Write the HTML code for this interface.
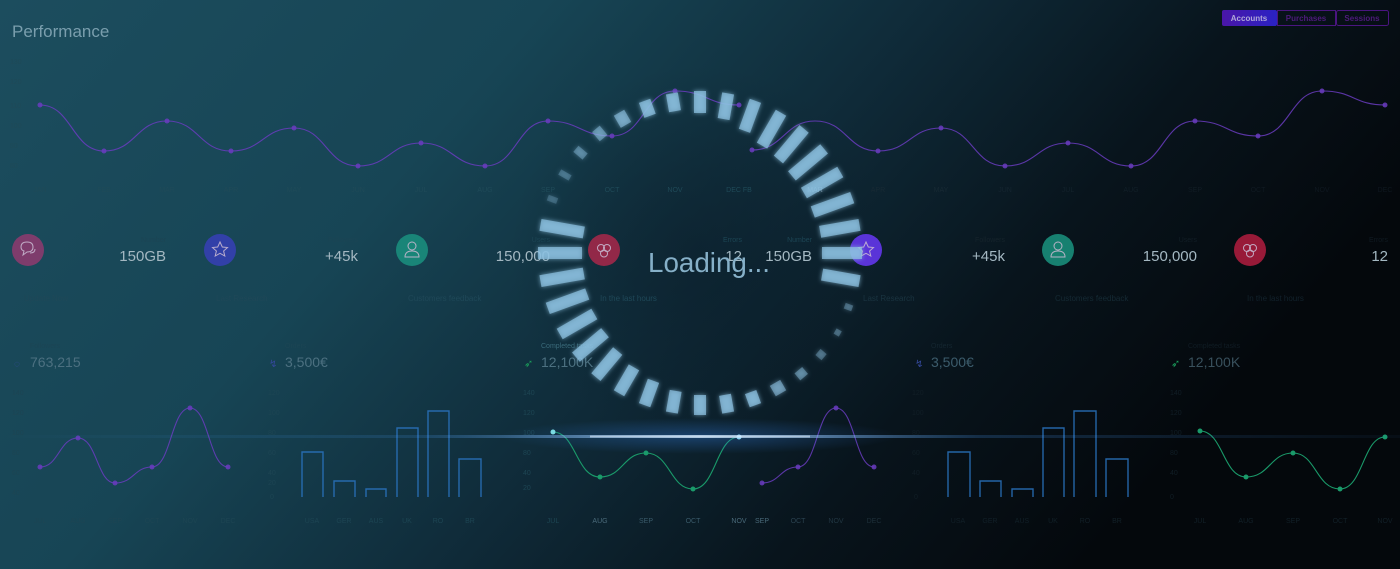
<!DOCTYPE html>
<html><head><meta charset="utf-8"><style>
html,body{margin:0;padding:0;width:1400px;height:569px;overflow:hidden;background:#0a1820;font-family:"Liberation Sans",sans-serif}
svg{position:absolute;left:0;top:0}
</style></head><body>
<svg width="1400" height="569" viewBox="0 0 1400 569" xmlns="http://www.w3.org/2000/svg">
<defs>
<linearGradient id="bg" x1="0" y1="0" x2="1" y2="0.35">
<stop offset="0" stop-color="#1c4d5e"/><stop offset="0.35" stop-color="#174555"/><stop offset="0.6" stop-color="#0f2a38"/><stop offset="0.8" stop-color="#08141c"/><stop offset="1" stop-color="#04080c"/>
</linearGradient>
<radialGradient id="dark" cx="700" cy="255" r="190" gradientUnits="userSpaceOnUse">
<stop offset="0" stop-color="#0a1c28" stop-opacity="0.5"/><stop offset="1" stop-color="#0a1c28" stop-opacity="0"/>
</radialGradient>
<linearGradient id="streak" x1="0" y1="0" x2="1" y2="0">
<stop offset="0" stop-color="#4aa0ff" stop-opacity="0"/><stop offset="0.3" stop-color="#4aa0ff" stop-opacity="0.2"/><stop offset="0.5" stop-color="#cfe8ff" stop-opacity="0.9"/><stop offset="0.7" stop-color="#4aa0ff" stop-opacity="0.25"/><stop offset="1" stop-color="#4aa0ff" stop-opacity="0.05"/>
</linearGradient>
<radialGradient id="glow" cx="0.5" cy="0.5" r="0.5">
<stop offset="0" stop-color="#3a8cff" stop-opacity="0.3"/><stop offset="1" stop-color="#3a8cff" stop-opacity="0"/>
</radialGradient>
<linearGradient id="tab" x1="0" x2="1"><stop offset="0" stop-color="#4a16a8"/><stop offset="1" stop-color="#2a22c4"/></linearGradient>
<filter id="gl" x="-50%" y="-50%" width="200%" height="200%"><feGaussianBlur stdDeviation="2.5" result="b"/><feMerge><feMergeNode in="b"/><feMergeNode in="SourceGraphic"/></feMerge></filter>
</defs>
<rect width="1400" height="569" fill="url(#bg)"/>
<rect width="1400" height="569" fill="url(#dark)"/>

<text x="12" y="37" font-size="17" fill="#7a9ead">Performance</text>

<rect x="1222" y="10" width="55" height="16" rx="2" fill="url(#tab)"/>
<rect x="1277.5" y="10.5" width="58" height="15" fill="none" stroke="#4a1580"/>
<rect x="1336.5" y="10.5" width="52" height="15" rx="2" fill="none" stroke="#4a1580"/>
<text x="1249" y="21" font-size="8" fill="#b0a8d8" text-anchor="middle" font-weight="bold">Accounts</text>
<text x="1306" y="21" font-size="8" fill="#4e1a7c" text-anchor="middle" font-weight="bold">Purchases</text>
<text x="1362" y="21" font-size="8" fill="#4e1a7c" text-anchor="middle" font-weight="bold">Sessions</text>

<g font-size="7" fill="#1f4a58">
<text x="10" y="64">130</text><text x="10" y="84">120</text><text x="10" y="108">110</text><text x="10" y="128">100</text><text x="10" y="148">90</text><text x="10" y="168">80</text>
</g>
<g fill="none" stroke="#6a3cc0" stroke-width="1.1" opacity="0.85">
<path d="M40,105 C72,105 72,151 104,151 C136,151 136,121 167,121 C199,121 199,151 231,151 C263,151 263,128 294,128 C326,128 326,166 358,166 C390,166 390,143 421,143 C453,143 453,166 485,166 C517,166 517,121 548,121 C580,121 580,136 612,136 C644,136 644,91 675,91 C707,91 707,105 739,105"/>
<path d="M752,150 C784,150 784,121 815,121 C847,121 847,151 878,151 C910,151 910,128 941,128 C973,128 973,166 1005,166 C1037,166 1037,143 1068,143 C1100,143 1100,166 1131,166 C1163,166 1163,121 1195,121 C1227,121 1227,136 1258,136 C1290,136 1290,91 1322,91 C1354,91 1354,105 1385,105"/>
</g>
<g fill="#6a3cc0" opacity="0.85">
<circle cx="40" cy="105" r="2.5"/><circle cx="104" cy="151" r="2.5"/><circle cx="167" cy="121" r="2.5"/><circle cx="231" cy="151" r="2.5"/><circle cx="294" cy="128" r="2.5"/><circle cx="358" cy="166" r="2.5"/><circle cx="421" cy="143" r="2.5"/><circle cx="485" cy="166" r="2.5"/><circle cx="548" cy="121" r="2.5"/><circle cx="612" cy="136" r="2.5"/><circle cx="675" cy="91" r="2.5"/><circle cx="739" cy="105" r="2.5"/>
<circle cx="752" cy="150" r="2.5"/><circle cx="878" cy="151" r="2.5"/><circle cx="941" cy="128" r="2.5"/><circle cx="1005" cy="166" r="2.5"/><circle cx="1068" cy="143" r="2.5"/><circle cx="1131" cy="166" r="2.5"/><circle cx="1195" cy="121" r="2.5"/><circle cx="1258" cy="136" r="2.5"/><circle cx="1322" cy="91" r="2.5"/><circle cx="1385" cy="105" r="2.5"/>
</g>
<g font-size="7" fill="#1f4a58" text-anchor="middle">
<text x="40" y="192">JAN</text><text x="104" y="192">FEB</text><text x="167" y="192">MAR</text><text x="231" y="192">APR</text><text x="294" y="192">MAY</text><text x="358" y="192">JUN</text><text x="421" y="192">JUL</text><text x="485" y="192">AUG</text><text x="548" y="192">SEP</text><text x="612" y="192">OCT</text><text x="675" y="192">NOV</text><text x="739" y="192">DEC FB</text>
<text x="815" y="192" fill="#7890a0">MAR</text><text x="878" y="192" fill="#182a34">APR</text><text x="941" y="192" fill="#182a34">MAY</text><text x="1005" y="192" fill="#152530">JUN</text><text x="1068" y="192" fill="#13222c">JUL</text><text x="1131" y="192" fill="#121f28">AUG</text><text x="1195" y="192" fill="#111c24">SEP</text><text x="1258" y="192" fill="#101a22">OCT</text><text x="1322" y="192" fill="#0f1820">NOV</text><text x="1385" y="192" fill="#0f1820">DEC</text>
</g>

<circle cx="28" cy="250" r="16" fill="#7e3c6c"/>
<circle cx="220" cy="250" r="16" fill="#3240a8"/>
<circle cx="412" cy="250" r="16" fill="#198578"/>
<circle cx="604" cy="250" r="16" fill="#922848"/>
<circle cx="866" cy="250" r="16" fill="#5a34d8"/>
<circle cx="1058" cy="250" r="16" fill="#178070"/>
<circle cx="1250" cy="250" r="16" fill="#981a38"/>
<g fill="none" stroke="#c8b8d0" stroke-width="1" opacity="0.9">
<path d="M21,247 Q21,242 27,242 Q33,242 33,247 Q33,252 27,252 L23,255 L24,251 Q21,250 21,247 Z"/><path d="M30,253 Q35,253 35,249"/>
<path d="M220,242 L222.3,247 L227.5,247.5 L223.6,251 L224.8,256 L220,253.3 L215.2,256 L216.4,251 L212.5,247.5 L217.7,247 Z"/>
<path d="M866,242 L868.3,247 L873.5,247.5 L869.6,251 L870.8,256 L866,253.3 L861.2,256 L862.4,251 L858.5,247.5 L863.7,247 Z"/>
<circle cx="412" cy="246" r="4"/><path d="M405,257 Q405,251 412,251 Q419,251 419,257 Z"/>
<circle cx="1058" cy="246" r="4"/><path d="M1051,257 Q1051,251 1058,251 Q1065,251 1065,257 Z"/>
<circle cx="601" cy="248" r="3.5"/><circle cx="607" cy="248" r="3.5"/><circle cx="604" cy="253.5" r="3.5"/>
<circle cx="1247" cy="248" r="3.5"/><circle cx="1253" cy="248" r="3.5"/><circle cx="1250" cy="253.5" r="3.5"/>
</g>
<g font-size="7" fill="#1c4554" text-anchor="end">
<text x="166" y="242">Number</text><text x="358" y="242">Followers</text><text x="550" y="242">Users</text><text x="742" y="242">Errors</text><text x="812" y="242">Number</text><text x="1005" y="242" fill="#16242c">Followers</text><text x="1197" y="242" fill="#121e26">Users</text><text x="1388" y="242" fill="#101a22">Errors</text>
</g>
<g font-size="15" fill="#a4b8c2" text-anchor="end">
<text x="166" y="261">150GB</text><text x="358" y="261">+45k</text><text x="550" y="261">150,000</text><text x="742" y="261">12</text><text x="812" y="261">150GB</text><text x="1005" y="261">+45k</text><text x="1197" y="261">150,000</text><text x="1388" y="261">12</text>
</g>
<g font-size="8" fill="#1f4858">
<text x="24" y="301">Update Now</text><text x="216" y="301">Last Research</text><text x="408" y="301">Customers feedback</text><text x="600" y="301">In the last hours</text><text x="863" y="301" fill="#1a3440">Last Research</text><text x="1055" y="301" fill="#152a34">Customers feedback</text><text x="1247" y="301" fill="#12222c">In the last hours</text>
</g>

<g font-size="7" fill="#1c4554"><text x="30" y="348">Followers</text><text x="285" y="348">Orders</text><text x="541" y="348" fill="#3a6a7a">Completed tasks</text><text x="931" y="348" fill="#142630">Orders</text><text x="1188" y="348" fill="#101c24">Completed tasks</text></g>
<g font-size="14" fill="#4c7080">
<text x="30" y="367">763,215</text><text x="285" y="367">3,500€</text><text x="541" y="367">12,100K</text><text x="931" y="367" fill="#3c5c6c">3,500€</text><text x="1188" y="367" fill="#38505c">12,100K</text>
</g>
<g font-size="10" fill="#34489a"><text x="14" y="367">◌</text><text x="269" y="367">↯</text><text x="915" y="367">↯</text></g>
<g font-size="11" fill="#1a9a5a"><text x="524" y="367">➶</text><text x="1171" y="367">➶</text></g>

<g font-size="7" fill="#1d4553">
<text x="12" y="395">140</text><text x="12" y="415">120</text><text x="12" y="435">100</text><text x="12" y="455">80</text><text x="12" y="475">60</text><text x="12" y="495">40</text>
<text x="268" y="395">120</text><text x="268" y="415">100</text><text x="268" y="435">80</text><text x="268" y="455">60</text><text x="268" y="475">40</text><text x="268" y="485">20</text><text x="270" y="499">0</text>
<text x="523" y="395">140</text><text x="523" y="415">120</text><text x="523" y="435">100</text><text x="523" y="455">80</text><text x="523" y="475">40</text><text x="523" y="490">20</text>
</g>
<g font-size="7" fill="#111e26">
<text x="1170" y="395">140</text><text x="1170" y="415">120</text><text x="1170" y="435">100</text><text x="1170" y="455">80</text><text x="1170" y="475">40</text><text x="1170" y="499">0</text>
<text x="912" y="395">120</text><text x="912" y="415">100</text><text x="912" y="435">80</text><text x="912" y="455">60</text><text x="912" y="475">40</text><text x="914" y="499">0</text>
</g>
<g font-size="7" fill="#1d4553" text-anchor="middle">
<text x="40" y="523">JUL</text><text x="78" y="523">AUG</text><text x="115" y="523">SEP</text><text x="152" y="523">OCT</text><text x="190" y="523">NOV</text><text x="228" y="523">DEC</text>
<text x="312" y="523">USA</text><text x="344" y="523">GER</text><text x="376" y="523">AUS</text><text x="407" y="523">UK</text><text x="438" y="523">RO</text><text x="470" y="523">BR</text>
<text x="553" y="523">JUL</text><text x="600" y="523" fill="#4a6a7a">AUG</text><text x="646" y="523" fill="#3a5a6a">SEP</text><text x="693" y="523" fill="#3a5a6a">OCT</text><text x="739" y="523" fill="#4a6a7a">NOV</text><text x="762" y="523" fill="#4a6a7a">SEP</text><text x="798" y="523" fill="#2a4250">OCT</text><text x="836" y="523" fill="#223642">NOV</text><text x="874" y="523" fill="#1e303a">DEC</text>
</g>
<g font-size="7" fill="#122028" text-anchor="middle">
<text x="958" y="523">USA</text><text x="990" y="523">GER</text><text x="1022" y="523">AUS</text><text x="1053" y="523">UK</text><text x="1085" y="523">RO</text><text x="1117" y="523">BR</text>
<text x="1200" y="523">JUL</text><text x="1246" y="523">AUG</text><text x="1293" y="523">SEP</text><text x="1340" y="523">OCT</text><text x="1385" y="523">NOV</text>
</g>

<g fill="none" stroke="#6a3cc0" stroke-width="1.1" opacity="0.85">
<path d="M40,467 C59,467 59,438 78,438 C97,438 97,483 115,483 C134,483 134,467 152,467 C171,467 171,408 190,408 C209,408 209,467 228,467"/>
<path d="M762,483 C780,483 780,467 798,467 C817,467 817,408 836,408 C855,408 855,467 874,467"/>
</g>
<g fill="#6a3cc0" opacity="0.85"><circle cx="40" cy="467" r="2.5"/><circle cx="78" cy="438" r="2.5"/><circle cx="115" cy="483" r="2.5"/><circle cx="152" cy="467" r="2.5"/><circle cx="190" cy="408" r="2.5"/><circle cx="228" cy="467" r="2.5"/><circle cx="762" cy="483" r="2.5"/><circle cx="798" cy="467" r="2.5"/><circle cx="836" cy="408" r="2.5"/><circle cx="874" cy="467" r="2.5"/></g>
<g fill="none" stroke="#1a9a6a" stroke-width="1.1">
<path d="M553,432 C576,432 576,477 600,477 C623,477 623,453 646,453 C670,453 670,489 693,489 C716,489 716,437 739,437"/>
<path d="M1200,431 C1223,431 1223,477 1246,477 C1270,477 1270,453 1293,453 C1316,453 1316,489 1340,489 C1363,489 1363,437 1385,437"/>
</g>
<g fill="#1a9a6a"><circle cx="553" cy="432" r="2.5" fill="#7fe0e0"/><circle cx="600" cy="477" r="2.5"/><circle cx="646" cy="453" r="2.5"/><circle cx="693" cy="489" r="2.5"/><circle cx="739" cy="437" r="2.5" fill="#a0e8f0"/><circle cx="1200" cy="431" r="2.5"/><circle cx="1246" cy="477" r="2.5"/><circle cx="1293" cy="453" r="2.5"/><circle cx="1340" cy="489" r="2.5"/><circle cx="1385" cy="437" r="2.5"/></g>
<g fill="none" stroke="#2a74c0" stroke-width="1.4" opacity="0.85">
<path d="M302,497 V452 H323 V497"/><path d="M334,497 V481 H355 V497"/><path d="M366,497 V489 H386 V497"/><path d="M397,497 V428 H418 V497"/><path d="M428,497 V411 H449 V497"/><path d="M459,497 V459 H481 V497"/>
<path d="M948,497 V452 H970 V497"/><path d="M980,497 V481 H1001 V497"/><path d="M1012,497 V489 H1033 V497"/><path d="M1043,497 V428 H1064 V497"/><path d="M1074,497 V411 H1096 V497"/><path d="M1106,497 V459 H1128 V497"/>
</g>

<ellipse cx="700" cy="436" rx="200" ry="18" fill="url(#glow)"/>
<rect x="0" y="435" width="1400" height="3" fill="url(#streak)" opacity="0.8"/>
<rect x="590" y="435.5" width="220" height="2" fill="#e8f4ff" opacity="0.55"/>

<g fill="#8cc0e0" fill-opacity="0.72" filter="url(#gl)">
<rect x="694" y="91" width="12" height="22" transform="rotate(0 700 253)"/>
<rect x="694" y="91" width="12" height="26" transform="rotate(10 700 253)"/>
<rect x="694" y="91" width="12" height="32" transform="rotate(20 700 253)"/>
<rect x="694" y="91" width="12" height="38" transform="rotate(30 700 253)"/>
<rect x="694" y="91" width="12" height="40" transform="rotate(40 700 253)"/>
<rect x="694" y="91" width="12" height="42" transform="rotate(50 700 253)"/>
<rect x="694" y="91" width="12" height="42" transform="rotate(60 700 253)"/>
<rect x="694" y="91" width="12" height="42" transform="rotate(70 700 253)"/>
<rect x="694" y="91" width="12" height="40" transform="rotate(80 700 253)"/>
<rect x="694" y="91" width="12" height="40" transform="rotate(90 700 253)"/>
<rect x="694" y="91" width="12" height="38" transform="rotate(100 700 253)"/>
<rect x="697" y="91" width="6" height="8" transform="rotate(110 700 253)" fill-opacity="0.35"/>
<rect x="697" y="91" width="6" height="6" transform="rotate(120 700 253)" fill-opacity="0.35"/>
<rect x="696" y="91" width="8" height="8" transform="rotate(130 700 253)" fill-opacity="0.35"/>
<rect x="695" y="91" width="10" height="9" transform="rotate(140 700 253)" fill-opacity="0.45"/>
<rect x="694" y="91" width="12" height="12" transform="rotate(150 700 253)" fill-opacity="0.55"/>
<rect x="694" y="91" width="12" height="14" transform="rotate(160 700 253)"/>
<rect x="694" y="91" width="12" height="18" transform="rotate(170 700 253)"/>
<rect x="694" y="91" width="12" height="20" transform="rotate(180 700 253)"/>
<rect x="694" y="91" width="12" height="22" transform="rotate(190 700 253)"/>
<rect x="694" y="91" width="12" height="26" transform="rotate(200 700 253)"/>
<rect x="694" y="91" width="12" height="30" transform="rotate(210 700 253)"/>
<rect x="694" y="91" width="12" height="34" transform="rotate(220 700 253)"/>
<rect x="694" y="91" width="12" height="38" transform="rotate(230 700 253)"/>
<rect x="694" y="91" width="12" height="40" transform="rotate(240 700 253)"/>
<rect x="694" y="91" width="12" height="42" transform="rotate(250 700 253)"/>
<rect x="694" y="91" width="12" height="44" transform="rotate(260 700 253)"/>
<rect x="694" y="91" width="12" height="44" transform="rotate(270 700 253)"/>
<rect x="694" y="91" width="12" height="44" transform="rotate(280 700 253)"/>
<rect x="697" y="91" width="6" height="10" transform="rotate(290 700 253)" fill-opacity="0.25"/>
<rect x="697" y="91" width="6" height="12" transform="rotate(300 700 253)" fill-opacity="0.3"/>
<rect x="696" y="91" width="8" height="12" transform="rotate(310 700 253)" fill-opacity="0.4"/>
<rect x="695" y="91" width="10" height="12" transform="rotate(320 700 253)" fill-opacity="0.5"/>
<rect x="694" y="91" width="12" height="14" transform="rotate(330 700 253)" fill-opacity="0.6"/>
<rect x="694" y="91" width="12" height="16" transform="rotate(340 700 253)"/>
<rect x="694" y="91" width="12" height="18" transform="rotate(350 700 253)"/>
</g>
<text x="709" y="272" font-size="28" fill="#86b0c8" text-anchor="middle" textLength="122" lengthAdjust="spacingAndGlyphs">Loading...</text>
</svg>
</body></html>
